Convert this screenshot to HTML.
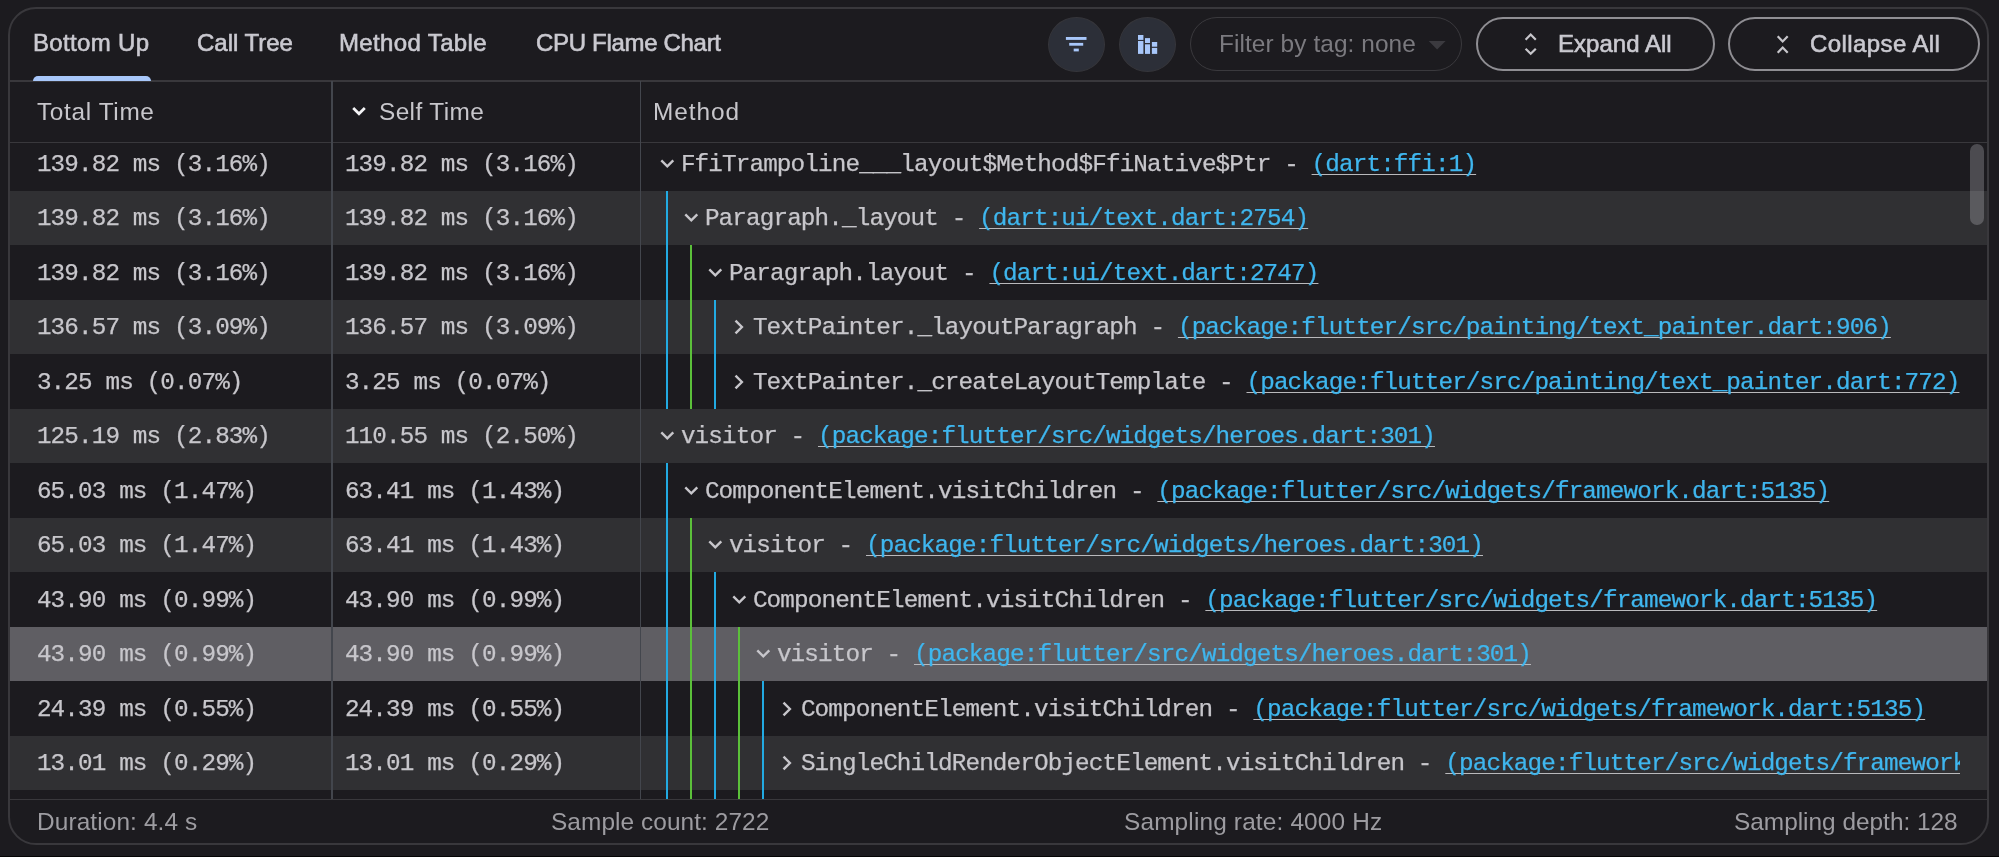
<!DOCTYPE html>
<html><head><meta charset="utf-8"><style>
*{margin:0;padding:0;box-sizing:border-box}
html,body{width:1999px;height:857px;overflow:hidden;background:#1c1b1f}
body{position:relative;font-family:"Liberation Sans",sans-serif;color:#c7c6cb}
#panel{position:absolute;left:8.3px;top:7.2px;width:1981px;height:837.5px;border:2px solid #39383c;border-radius:28px}
#bottomband{position:absolute;left:0;top:855.5px;width:1999px;height:2px;background:#050505}
.sans{position:absolute;font-size:24.4px;line-height:32px;white-space:nowrap;will-change:transform}
#tabline{position:absolute;left:10px;top:80px;width:1978px;height:1.5px;background:#39383c}
#ind{position:absolute;left:33px;top:75.5px;width:118px;height:5.2px;background:#a8c7fa;border-radius:6px 6px 0 0}
#hdrline{position:absolute;left:10px;top:141.5px;width:1978px;height:1.5px;background:#39383c}
.colsep{position:absolute;top:81px;width:1.5px;height:718px;background:#43464d}
#rows{position:absolute;left:10px;top:142.5px;width:1977px;height:656.5px;overflow:hidden;will-change:transform}
.row{position:absolute;left:0;width:1977px;height:55.0px}
.mono{font-family:"Liberation Mono",monospace;font-size:24.3px;letter-spacing:-0.870px;line-height:32px;position:absolute;white-space:nowrap;color:#c7c6cb;-webkit-text-stroke:0.25px currentColor}
.link{position:static;color:#3fb6ee;text-decoration:underline;text-decoration-color:#b9b9bc;text-decoration-thickness:1.3px;text-underline-offset:3px;text-decoration-skip-ink:none}
.clip{position:absolute;left:650px;top:0;width:1300px;height:54.5px;overflow:hidden}
.vl{position:absolute;top:0;width:2px;height:55.5px}
.chev{position:absolute}
#footline{position:absolute;left:10px;top:798.5px;width:1978px;height:1.5px;background:#39383c}
.circ{position:absolute;top:16.5px;width:57px;height:55px;border-radius:50%;background:#2c2f38;border:1px solid #35353a}
.pill{position:absolute;top:17px;height:54px;border-radius:27px}
#thumb{position:absolute;left:1970px;top:143.5px;width:13.5px;height:81.5px;border-radius:7px;background:rgba(200,200,210,0.28)}
</style></head><body>
<div id="panel"></div>
<div id="bottomband"></div>
<div id="tabline"></div>
<div id="ind"></div>
<div id="rows"><div class="row" style="top:-7.00px;background:#1c1b1f"><span class="mono" style="left:26.90px;top:12.90px">139.82 ms (3.16%)</span><span class="mono" style="left:334.90px;top:12.90px">139.82 ms (3.16%)</span><svg class="chev" style="left:648.80px;top:19.50px" width="16" height="16" viewBox="0 0 16 16"><path d="M2.3 4.4 L8.3 10.4 L14.3 4.4" fill="none" stroke="#c7c6cb" stroke-width="2.4"/></svg><div class="clip"><span class="mono" style="left:20.90px;top:12.90px">FfiTrampoline___layout$Method$FfiNative$Ptr - <span class="link">(dart:ffi:1)</span></span></div></div><div class="row" style="top:47.50px;background:#303033"><span class="mono" style="left:26.90px;top:12.90px">139.82 ms (3.16%)</span><span class="mono" style="left:334.90px;top:12.90px">139.82 ms (3.16%)</span><div class="vl" style="left:656.1px;background:#22aae2"></div><svg class="chev" style="left:672.80px;top:19.50px" width="16" height="16" viewBox="0 0 16 16"><path d="M2.3 4.4 L8.3 10.4 L14.3 4.4" fill="none" stroke="#c7c6cb" stroke-width="2.4"/></svg><div class="clip"><span class="mono" style="left:44.90px;top:12.90px">Paragraph._layout - <span class="link">(dart:ui/text.dart:2754)</span></span></div></div><div class="row" style="top:102.00px;background:#1c1b1f"><span class="mono" style="left:26.90px;top:12.90px">139.82 ms (3.16%)</span><span class="mono" style="left:334.90px;top:12.90px">139.82 ms (3.16%)</span><div class="vl" style="left:656.1px;background:#22aae2"></div><div class="vl" style="left:680.1px;background:#5bc03a"></div><svg class="chev" style="left:696.80px;top:19.50px" width="16" height="16" viewBox="0 0 16 16"><path d="M2.3 4.4 L8.3 10.4 L14.3 4.4" fill="none" stroke="#c7c6cb" stroke-width="2.4"/></svg><div class="clip"><span class="mono" style="left:68.90px;top:12.90px">Paragraph.layout - <span class="link">(dart:ui/text.dart:2747)</span></span></div></div><div class="row" style="top:156.50px;background:#303033"><span class="mono" style="left:26.90px;top:12.90px">136.57 ms (3.09%)</span><span class="mono" style="left:334.90px;top:12.90px">136.57 ms (3.09%)</span><div class="vl" style="left:656.1px;background:#22aae2"></div><div class="vl" style="left:680.1px;background:#5bc03a"></div><div class="vl" style="left:704.1px;background:#22aae2"></div><svg class="chev" style="left:720.80px;top:19.50px" width="16" height="16" viewBox="0 0 16 16"><path d="M4.5 1.6 L10.9 8 L4.5 14.4" fill="none" stroke="#c7c6cb" stroke-width="2.4"/></svg><div class="clip"><span class="mono" style="left:92.90px;top:12.90px">TextPainter._layoutParagraph - <span class="link">(package:flutter/src/painting/text_painter.dart:906)</span></span></div></div><div class="row" style="top:211.00px;background:#1c1b1f"><span class="mono" style="left:26.90px;top:12.90px">3.25 ms (0.07%)</span><span class="mono" style="left:334.90px;top:12.90px">3.25 ms (0.07%)</span><div class="vl" style="left:656.1px;background:#22aae2"></div><div class="vl" style="left:680.1px;background:#5bc03a"></div><div class="vl" style="left:704.1px;background:#22aae2"></div><svg class="chev" style="left:720.80px;top:19.50px" width="16" height="16" viewBox="0 0 16 16"><path d="M4.5 1.6 L10.9 8 L4.5 14.4" fill="none" stroke="#c7c6cb" stroke-width="2.4"/></svg><div class="clip"><span class="mono" style="left:92.90px;top:12.90px">TextPainter._createLayoutTemplate - <span class="link">(package:flutter/src/painting/text_painter.dart:772)</span></span></div></div><div class="row" style="top:265.50px;background:#303033"><span class="mono" style="left:26.90px;top:12.90px">125.19 ms (2.83%)</span><span class="mono" style="left:334.90px;top:12.90px">110.55 ms (2.50%)</span><svg class="chev" style="left:648.80px;top:19.50px" width="16" height="16" viewBox="0 0 16 16"><path d="M2.3 4.4 L8.3 10.4 L14.3 4.4" fill="none" stroke="#c7c6cb" stroke-width="2.4"/></svg><div class="clip"><span class="mono" style="left:20.90px;top:12.90px">visitor - <span class="link">(package:flutter/src/widgets/heroes.dart:301)</span></span></div></div><div class="row" style="top:320.00px;background:#1c1b1f"><span class="mono" style="left:26.90px;top:12.90px">65.03 ms (1.47%)</span><span class="mono" style="left:334.90px;top:12.90px">63.41 ms (1.43%)</span><div class="vl" style="left:656.1px;background:#22aae2"></div><svg class="chev" style="left:672.80px;top:19.50px" width="16" height="16" viewBox="0 0 16 16"><path d="M2.3 4.4 L8.3 10.4 L14.3 4.4" fill="none" stroke="#c7c6cb" stroke-width="2.4"/></svg><div class="clip"><span class="mono" style="left:44.90px;top:12.90px">ComponentElement.visitChildren - <span class="link">(package:flutter/src/widgets/framework.dart:5135)</span></span></div></div><div class="row" style="top:374.50px;background:#303033"><span class="mono" style="left:26.90px;top:12.90px">65.03 ms (1.47%)</span><span class="mono" style="left:334.90px;top:12.90px">63.41 ms (1.43%)</span><div class="vl" style="left:656.1px;background:#22aae2"></div><div class="vl" style="left:680.1px;background:#5bc03a"></div><svg class="chev" style="left:696.80px;top:19.50px" width="16" height="16" viewBox="0 0 16 16"><path d="M2.3 4.4 L8.3 10.4 L14.3 4.4" fill="none" stroke="#c7c6cb" stroke-width="2.4"/></svg><div class="clip"><span class="mono" style="left:68.90px;top:12.90px">visitor - <span class="link">(package:flutter/src/widgets/heroes.dart:301)</span></span></div></div><div class="row" style="top:429.00px;background:#1c1b1f"><span class="mono" style="left:26.90px;top:12.90px">43.90 ms (0.99%)</span><span class="mono" style="left:334.90px;top:12.90px">43.90 ms (0.99%)</span><div class="vl" style="left:656.1px;background:#22aae2"></div><div class="vl" style="left:680.1px;background:#5bc03a"></div><div class="vl" style="left:704.1px;background:#22aae2"></div><svg class="chev" style="left:720.80px;top:19.50px" width="16" height="16" viewBox="0 0 16 16"><path d="M2.3 4.4 L8.3 10.4 L14.3 4.4" fill="none" stroke="#c7c6cb" stroke-width="2.4"/></svg><div class="clip"><span class="mono" style="left:92.90px;top:12.90px">ComponentElement.visitChildren - <span class="link">(package:flutter/src/widgets/framework.dart:5135)</span></span></div></div><div class="row" style="top:483.50px;background:#5f5e63"><span class="mono" style="left:26.90px;top:12.90px">43.90 ms (0.99%)</span><span class="mono" style="left:334.90px;top:12.90px">43.90 ms (0.99%)</span><div class="vl" style="left:656.1px;background:#22aae2"></div><div class="vl" style="left:680.1px;background:#5bc03a"></div><div class="vl" style="left:704.1px;background:#22aae2"></div><div class="vl" style="left:728.1px;background:#5bc03a"></div><svg class="chev" style="left:744.80px;top:19.50px" width="16" height="16" viewBox="0 0 16 16"><path d="M2.3 4.4 L8.3 10.4 L14.3 4.4" fill="none" stroke="#c7c6cb" stroke-width="2.4"/></svg><div class="clip"><span class="mono" style="left:116.90px;top:12.90px">visitor - <span class="link">(package:flutter/src/widgets/heroes.dart:301)</span></span></div></div><div class="row" style="top:538.00px;background:#1c1b1f"><span class="mono" style="left:26.90px;top:12.90px">24.39 ms (0.55%)</span><span class="mono" style="left:334.90px;top:12.90px">24.39 ms (0.55%)</span><div class="vl" style="left:656.1px;background:#22aae2"></div><div class="vl" style="left:680.1px;background:#5bc03a"></div><div class="vl" style="left:704.1px;background:#22aae2"></div><div class="vl" style="left:728.1px;background:#5bc03a"></div><div class="vl" style="left:752.1px;background:#22aae2"></div><svg class="chev" style="left:768.80px;top:19.50px" width="16" height="16" viewBox="0 0 16 16"><path d="M4.5 1.6 L10.9 8 L4.5 14.4" fill="none" stroke="#c7c6cb" stroke-width="2.4"/></svg><div class="clip"><span class="mono" style="left:140.90px;top:12.90px">ComponentElement.visitChildren - <span class="link">(package:flutter/src/widgets/framework.dart:5135)</span></span></div></div><div class="row" style="top:592.50px;background:#303033"><span class="mono" style="left:26.90px;top:12.90px">13.01 ms (0.29%)</span><span class="mono" style="left:334.90px;top:12.90px">13.01 ms (0.29%)</span><div class="vl" style="left:656.1px;background:#22aae2"></div><div class="vl" style="left:680.1px;background:#5bc03a"></div><div class="vl" style="left:704.1px;background:#22aae2"></div><div class="vl" style="left:728.1px;background:#5bc03a"></div><div class="vl" style="left:752.1px;background:#22aae2"></div><svg class="chev" style="left:768.80px;top:19.50px" width="16" height="16" viewBox="0 0 16 16"><path d="M4.5 1.6 L10.9 8 L4.5 14.4" fill="none" stroke="#c7c6cb" stroke-width="2.4"/></svg><div class="clip"><span class="mono" style="left:140.90px;top:12.90px">SingleChildRenderObjectElement.visitChildren - <span class="link">(package:flutter/src/widgets/framework.dart:5135)</span></span></div></div><div class="row" style="top:647.00px;background:#1c1b1f"><div class="vl" style="left:656.1px;background:#22aae2"></div><div class="vl" style="left:680.1px;background:#5bc03a"></div><div class="vl" style="left:704.1px;background:#22aae2"></div><div class="vl" style="left:728.1px;background:#5bc03a"></div><div class="vl" style="left:752.1px;background:#22aae2"></div></div></div>
<div id="hdrline"></div>
<div class="colsep" style="left:331.2px"></div>
<div class="colsep" style="left:639.5px"></div>
<div id="footline"></div>
<div id="thumb"></div>
<svg class="chev" style="position:absolute;left:351px;top:103.4px" width="16" height="16" viewBox="0 0 16 16"><path d="M2.2 5 L8 10.8 L13.8 5" fill="none" stroke="#f4f4f6" stroke-width="2.7"/></svg>
<div class="circ" style="left:1047.5px"></div>
<div class="circ" style="left:1119px"></div>
<svg style="position:absolute;left:1060px;top:28px" width="32" height="32" viewBox="1060 28 32 32">
 <rect x="1065.9" y="37" width="20.6" height="2.9" fill="#a8c7fa"/>
 <rect x="1069.2" y="42.9" width="14" height="2.8" fill="#a8c7fa"/>
 <rect x="1073.7" y="48.6" width="5.1" height="2.8" fill="#a8c7fa"/>
</svg>
<svg style="position:absolute;left:1130px;top:28px" width="32" height="32" viewBox="1130 28 32 32">
 <rect x="1138" y="35" width="5.4" height="4.9" fill="#a8c7fa"/>
 <rect x="1138" y="41" width="5.4" height="12.9" fill="#a8c7fa"/>
 <rect x="1145" y="38.1" width="5" height="4.9" fill="#a8c7fa"/>
 <rect x="1145" y="44.3" width="5" height="9.6" fill="#a8c7fa"/>
 <rect x="1151.9" y="42" width="5.3" height="4.7" fill="#a8c7fa"/>
 <rect x="1151.9" y="47.9" width="5.3" height="6" fill="#a8c7fa"/>
</svg>
<div class="pill" style="left:1190px;width:272px;border:1.5px solid #3a393d"></div>
<svg style="position:absolute;left:1420px;top:35px" width="32" height="20" viewBox="1420 35 32 20"><path d="M1428.7 41 L1445.6 41 L1437.15 49.4 Z" fill="#3b3a3f"/></svg>
<div class="pill" style="left:1476px;width:239px;border:2px solid #8f8e93"></div>
<div class="pill" style="left:1728px;width:252px;border:2px solid #8f8e93"></div>
<svg style="position:absolute;left:1515px;top:28px" width="32" height="32" viewBox="1515 28 32 32" fill="none" stroke="#c7c6cb" stroke-width="2.2">
 <path d="M1525.6 39.8 L1530.7 34.6 L1535.8 39.8"/><path d="M1525.6 48.7 L1530.7 53.8 L1535.8 48.7"/>
</svg>
<svg style="position:absolute;left:1767px;top:28px" width="32" height="32" viewBox="1767 28 32 32" fill="none" stroke="#c7c6cb" stroke-width="2.2">
 <path d="M1777.7 36.3 L1782.7 41.4 L1787.7 36.3"/><path d="M1777.7 52.7 L1782.7 47.5 L1787.7 52.7"/>
</svg>
<div id="t1" class="sans" style="left:32.61px;top:26.99px;letter-spacing:0.337px;color:#cac9d0;-webkit-text-stroke:0.6px #cac9d0;font-size:24px;">Bottom Up</div>
<div id="t2" class="sans" style="left:196.86px;top:27.09px;letter-spacing:-0.022px;color:#cac9d0;-webkit-text-stroke:0.6px #cac9d0;font-size:24px;">Call Tree</div>
<div id="t3" class="sans" style="left:339.41px;top:26.99px;letter-spacing:0.359px;color:#cac9d0;-webkit-text-stroke:0.6px #cac9d0;font-size:24px;">Method Table</div>
<div id="t4" class="sans" style="left:535.66px;top:27.09px;letter-spacing:-0.314px;color:#cac9d0;-webkit-text-stroke:0.6px #cac9d0;font-size:24px;">CPU Flame Chart</div>
<div id="h1" class="sans" style="left:37.17px;top:96.00px;letter-spacing:0.640px;color:#c7c6cb;">Total Time</div>
<div id="h2" class="sans" style="left:378.72px;top:96.05px;letter-spacing:0.390px;color:#c7c6cb;">Self Time</div>
<div id="h3" class="sans" style="left:652.54px;top:96.00px;letter-spacing:0.947px;color:#c7c6cb;">Method</div>
<div id="f1" class="sans" style="left:36.73px;top:806.20px;letter-spacing:0.115px;color:#9d9ca1;">Duration: 4.4 s</div>
<div id="f2" class="sans" style="left:551.15px;top:806.27px;letter-spacing:0.078px;color:#9d9ca1;">Sample count: 2722</div>
<div id="f3" class="sans" style="left:1123.55px;top:806.27px;letter-spacing:0.156px;color:#9d9ca1;">Sampling rate: 4000 Hz</div>
<div id="f4" class="sans" style="left:1734.15px;top:806.27px;letter-spacing:-0.003px;color:#9d9ca1;">Sampling depth: 128</div>
<div id="b1" class="sans" style="left:1218.53px;top:28.40px;letter-spacing:0.087px;color:#7b7a7f;">Filter by tag: none</div>
<div id="b2" class="sans" style="left:1557.61px;top:28.39px;letter-spacing:0.025px;color:#cac9d0;-webkit-text-stroke:0.6px #cac9d0;font-size:24px;">Expand All</div>
<div id="b3" class="sans" style="left:1809.86px;top:28.49px;letter-spacing:0.408px;color:#cac9d0;-webkit-text-stroke:0.6px #cac9d0;font-size:24px;">Collapse All</div>
</body></html>
